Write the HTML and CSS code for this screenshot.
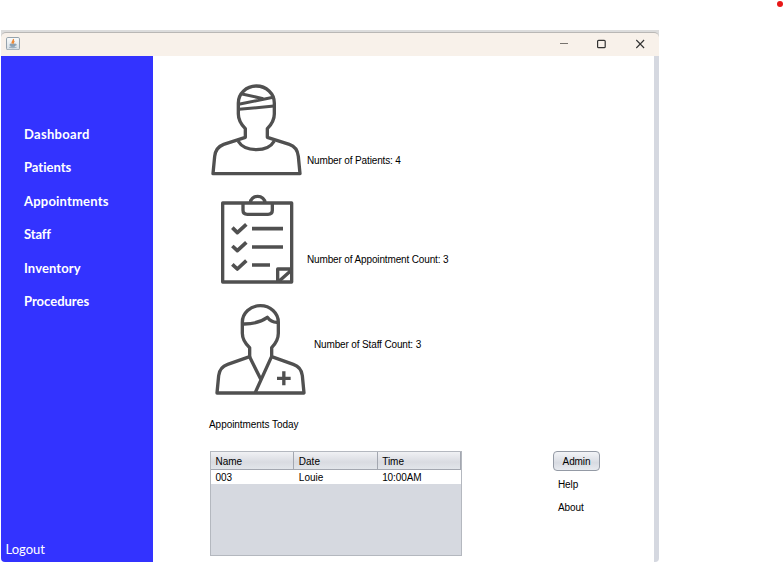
FILE: index.html
```html
<!DOCTYPE html>
<html lang="en">
<head>
<meta charset="utf-8">
<title>Dashboard</title>
<link rel="stylesheet" href="styles.css">
</head>
<body>
<span class="dot"></span>
<div class="window">
  <header class="titlebar">
    <svg class="java" viewBox="0 0 42 40">
      <defs><linearGradient id="jg" x1="0" y1="0" x2="0" y2="1"><stop offset="0" stop-color="#fafcfd"/><stop offset="1" stop-color="#d5dde4"/></linearGradient></defs>
      <rect x="1.5" y="1.5" width="39" height="37" rx="4" fill="url(#jg)" stroke="#94a1ab" stroke-width="3"/>
      <path d="M12 21h16v4q-1 4-5 4h-6q-4 0-5-4zM28 21q5 0 2 5M9 31q11 3 23 0" fill="#8ba0b2" stroke="#8ba0b2" stroke-width="2"/>
      <path d="M22 6c3 6-7 6-3 14M25 12c-4 3-2 4-3 8" fill="none" stroke="#ec8a38" stroke-width="4"/>
    </svg>
    <svg class="controls" viewBox="0 0 100 24" fill="none" stroke="#333">
      <path d="M5 10.500h8" stroke="#77736e"/>
      <rect x="42.6" y="7.3" width="7.6" height="7.4" rx="1" stroke-width="1.2"/>
      <path d="M81.3 7l7.8 8M89.1 7l-7.8 8" stroke-width="1.1"/>
    </svg>
  </header>
  <div class="body">
    <aside class="sidebar">
      <nav class="nav">
        <a class="n-dashboard">Dashboard</a>
        <a class="n-patients">Patients</a>
        <a class="n-appointments">Appointments</a>
        <a class="n-staff">Staff</a>
        <a class="n-inventory">Inventory</a>
        <a class="n-procedures">Procedures</a>
      </nav>
      <a class="logout">Logout</a>
    </aside>
    <main class="main">
      <section class="stat patients">
        <svg class="icon" viewBox="0 0 360 330">
          <path d="M136 187V161Q115 140 115 117V84A54 51 0 0 1 223 84V117Q223 140 202 161V187L268 208Q292 216 295 244L300 296H39L44 244Q47 217 71 208Z"/>
          <path d="M114 198Q130 224 169 224T223 198"/>
          <path d="M126 57L190 71M116 88L223 66M117 103L222 93" stroke-width="9"/>
        </svg>
        <span class="label">Number of Patients: 4</span>
      </section>
      <section class="stat appointments">
        <svg class="icon" viewBox="0 0 360 315">
          <path d="M53 291V54H260V291Z"/>
          <path d="M114 55V76Q114 88 127 88H189Q202 88 202 76V55M136 53A22 19 0 0 1 180 53"/>
          <path d="M82 128L97 143L124 118M82 183L97 197L124 172M82 238L97 252L124 227M141 131H234M141 186H234M141 240H195" stroke-width="11"/>
          <path d="M218 291V252H259M222 289L259 256"/>
        </svg>
        <span class="label">Number of Appointment Count: 3</span>
      </section>
      <section class="stat staff">
        <svg class="icon" viewBox="0 0 360 330">
          <path d="M134 185V158Q112 138 112 115V82A54 50 0 0 1 220 82V115Q220 138 200 158V185L265 208Q289 216 292 242L297 294H36L41 242Q44 216 68 208Z"/>
          <path d="M114 87Q158 88 187 67Q200 84 219 82M133 184L167 252M200 184L151 292"/>
          <path d="M216 250H257M236.500 229V271" stroke-width="10"/>
        </svg>
        <span class="label">Number of Staff Count: 3</span>
      </section>
      <h2 class="heading">Appointments Today</h2>
      <div class="bottom">
        <div class="table-pane">
          <table class="table">
            <thead><tr><th>Name</th><th>Date</th><th>Time</th></tr></thead>
            <tbody><tr><td>003</td><td>Louie</td><td>10:00AM</td></tr></tbody>
          </table>
        </div>
        <div class="links">
          <button class="admin">Admin</button>
          <a>Help</a>
          <a>About</a>
        </div>
      </div>
    </main>
    <div class="edge"></div>
  </div>
</div>
</body>
</html>
```
FILE: styles.css
```css
* { box-sizing: border-box; }
body {
  margin: 0;
  height: 564px;
  padding: 30px 0 0 1px;
  overflow: hidden;
  background: #fff;
  color: #000;
  font: 10px/12px "Liberation Sans", Arial, sans-serif;
}
.dot {
  position: absolute;
  left: 777px;
  top: 1px;
  width: 6px;
  height: 6px;
  border-radius: 50%;
  background: #e81717;
}
.window {
  width: 658px;
  height: 532px;
  display: flex;
  flex-direction: column;
  background: linear-gradient(#dcdcdc, #dcdcdc) top / 100% 8px no-repeat;
  border-radius: 0 0 4px 4px;
  overflow: hidden;
}
.titlebar {
  height: 24px;
  margin-top: 2px;
  display: flex;
  justify-content: space-between;
  background: #f8f1ea;
  border-top: 1px solid #b9b7b5;
  border-radius: 5px 5px 0 0;
}
.java { width: 14px; height: 13.300px; margin: 4px 0 0 5px; }
.controls { width: 100px; height: 24px; margin-right: 4px; }
.body { flex: 1; display: flex; }
.sidebar {
  width: 152px;
  display: flex;
  flex-direction: column;
  justify-content: space-between;
  background: #3333ff;
  color: #fff;
  font-family: Futura, "Tw Cen MT", Lato, sans-serif;
  font-variant-ligatures: none;
}
.nav {
  display: flex;
  flex-direction: column;
  align-items: flex-start;
  gap: 15.400px;
  padding: 69px 0 0 23px;
  font-size: 13px;
  font-weight: 700;
  line-height: 18px;
}
.n-dashboard { letter-spacing: 0.3px; }
.n-patients { letter-spacing: 0; }
.n-appointments { letter-spacing: 0.2px; }
.n-staff { letter-spacing: -0.15px; }
.n-inventory { letter-spacing: 0.1px; }
.n-procedures { letter-spacing: 0; }
.logout { padding: 0 0 5px 4.500px; font-size: 13px; line-height: 16px; }
.main { flex: 1; padding: 19px 0 0 47px; background: #fff; }
.edge { width: 5px; background: #d5d8e0; }
.stat { display: flex; height: 110px; }
.icon {
  width: 120px;
  height: 110px;
  flex: none;
  fill: none;
  stroke: #505050;
  stroke-width: 10;
  stroke-linejoin: round;
}
.label { white-space: nowrap; letter-spacing: -0.14px; }
.patients .label { margin: 80px 0 0 -13px; }
.appointments .icon { height: 105px; margin-left: 5px; }
.appointments .label { margin: 69px 0 0 -18px; }
.staff .icon { margin-left: 5px; }
.staff .label { margin: 44px 0 0 -11px; }
.heading { margin: 14px 0 0 9px; font: inherit; letter-spacing: -0.05px; }
.bottom { display: flex; margin-top: 20px; padding-left: 10px; }
.table-pane {
  width: 252px;
  height: 105px;
  background: #d6d9e0;
  border: 1px solid #b4b8bf;
}
.table {
  width: 250px;
  table-layout: fixed;
  border-collapse: separate;
  border-spacing: 0;
}
.table th, .table td { padding: 2px 4.500px 0; text-align: left; font-weight: 400; }
.table th {
  height: 18px;
  background: linear-gradient(#f0f1f4, #d9dbe1 60%, #e2e5ea);
  border-right: 1px solid #a3a7b0;
  border-bottom: 1px solid #a3a7b0;
}
.table td { height: 14px; background: #fff; }
.table td:last-child { letter-spacing: -0.1px; }
.links { display: flex; flex-direction: column; align-items: flex-start; margin-left: 91px; }
.admin {
  width: 47px;
  height: 20px;
  padding: 2px 0 0;
  border: 1px solid #949aa5;
  border-radius: 4px;
  background: linear-gradient(#f3f4f7, #d8dbe2 60%, #e7eaef);
  font: inherit;
  color: inherit;
  letter-spacing: -0.1px;
}
.links a { margin: 8px 0 0 5px; letter-spacing: -0.1px; }
.links a + a { margin-top: 11px; }
```
